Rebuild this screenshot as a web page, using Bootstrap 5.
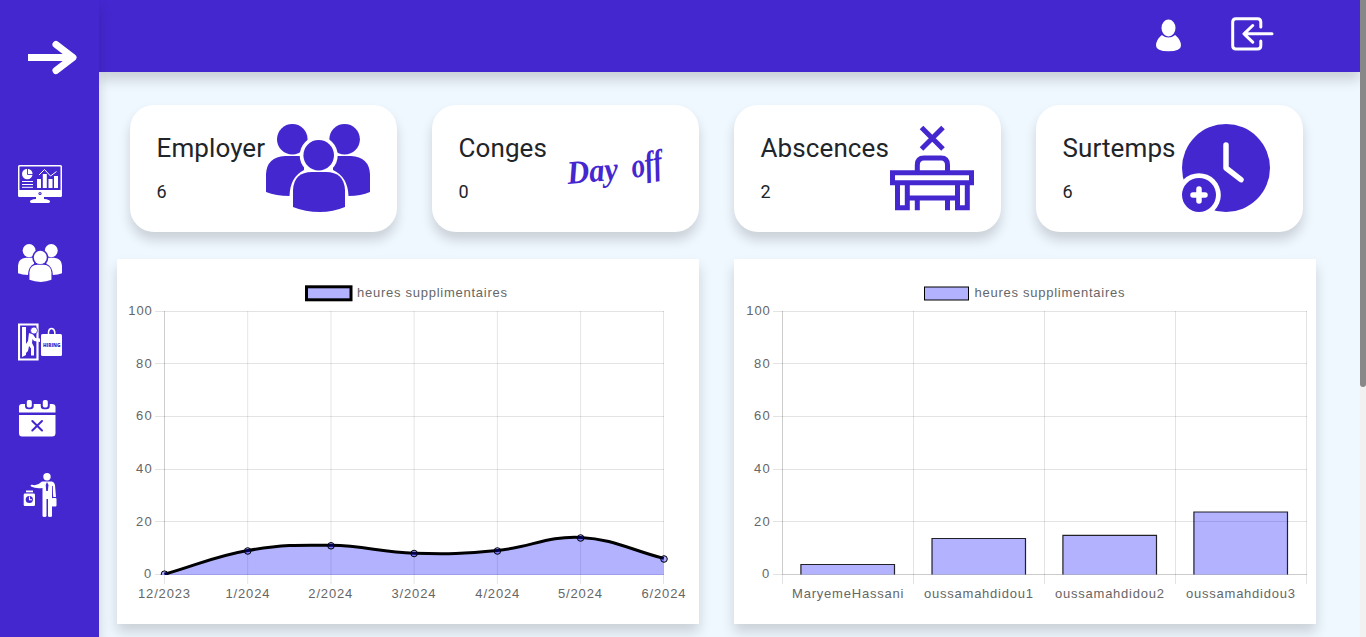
<!DOCTYPE html>
<html lang="fr">
<head>
<meta charset="utf-8">
<meta name="viewport" content="width=device-width, initial-scale=1">
<title>Dashboard</title>
<link rel="stylesheet" href="https://cdn.jsdelivr.net/npm/bootstrap@5.3.0/dist/css/bootstrap.min.css">
<style>
  :root { --brand: #4527cf; }
  body { font-family: Roboto, sans-serif; background: #f0f8ff; }
  svg { display: block; flex: none; }
  .soft-shadow { box-shadow: 0 8px 12px rgba(0, 0, 0, .16); }
  .side-menu { width: 99px; background: var(--brand); padding: 40px 0 0 18px; z-index: 3; color: #fff; }
  .side-menu .toggle-link { margin: 0 0 90px 9px; }
  .top-bar { height: 72px; background: var(--brand); color: #fff; padding-right: 86px; gap: 49px; z-index: 2; }
  .stat-row { padding: 33px 57px 0 31px; gap: 35px; }
  .stat-card { flex: 1 1 0; height: 127px; border: 0; border-radius: 24px; padding: 19px 27px 0 26.5px; color: var(--brand); }
  .stat-name { font-size: 26px; line-height: 32px; margin: 8px 0 17px; color: #212529; white-space: nowrap; letter-spacing: .1px; font-weight: 400; }
  .stat-value { font-size: 18px; line-height: 22px; color: #212529; margin: 0; }
  .chart-row { padding: 27px 44px 0 18px; gap: 35px; }
  .chart-box { width: 582px; height: 365px; }
  .chart-box text { font: 13px "Liberation Sans", Arial, sans-serif; fill: #666; }
  .scroll-track { width: 6px; background: #f1f1f1; }
  .scroll-thumb { height: 387px; background: #888; border-radius: 0 0 3px 3px; }
</style>
</head>
<body class="vh-100 overflow-hidden">
<div class="d-flex vh-100">

  <nav class="side-menu position-relative soft-shadow flex-shrink-0">
    <a href="#" class="toggle-link d-block text-reset" aria-label="Menu">
      <svg width="52" height="35" viewBox="27 40 52 35"><path d="M28 57.5H73" stroke="currentColor" stroke-width="7"/><path d="M56 44.500L73 57.500L56 70.500" fill="none" stroke="currentColor" stroke-width="7" stroke-linecap="round" stroke-linejoin="round"/></svg>
    </a>
    <a href="#" class="d-block text-reset" aria-label="Tableau de bord">
      <svg width="46" height="78" viewBox="18 165 46 78">
        <rect x="18" y="165" width="44" height="32" rx="1.500" fill="#fff"/>
        <path d="M19.500 166.500H60.500V190H19.500Z" fill="#4527cf"/>
        <path d="M36 197H44V199Q50 199.500 50 201.500Q50 203 48 203H32Q30 203 30 201.500Q30 199.500 36 199Z" fill="#fff"/>
        <circle cx="40" cy="193.500" r="1.600" fill="#4527cf"/><circle cx="40" cy="193.500" r=".5" fill="#fff"/>
        <circle cx="27.300" cy="174" r="5.300" fill="#fff"/><path d="M27.500 168V174.500H33" fill="none" stroke="#4527cf" stroke-width=".9"/>
        <path d="M22 181.500H33M22 184.500H33M22 187.300H33" stroke="#fff" stroke-width="1"/>
        <path d="M37 179H41V188H37ZM42.800 174H46.800V188H42.800ZM48.500 179H52.500V188H48.500ZM54 176H58V188H54Z" fill="#fff"/>
        <path d="M39 175L44.500 169.500L50.500 176L56.500 171.500" fill="none" stroke="#fff" stroke-width="1"/>
      </svg>
    </a>
    <a href="#" class="d-block text-reset" aria-label="Employés">
      <svg width="46" height="80" viewBox="18 243 46 80"><svg x="18" y="244" width="44" height="38" viewBox="266 124 104 88" preserveAspectRatio="none"><use href="#people"/></svg></svg>
    </a>
    <a href="#" class="d-block text-reset" aria-label="Recrutement">
      <svg width="46" height="77" viewBox="18 323 46 77">
        <path d="M19 324.500H37.500V359.500H19Z" fill="none" stroke="#fff" stroke-width="2.200"/>
        <path d="M22 327H26V355L22 357Z" fill="#fff"/>
        <circle cx="34" cy="330.500" r="3.500" fill="#fff" stroke="#4527cf" stroke-width=".8"/>
        <path d="M29 333L33 334.500L35.500 338L40 338.500V342L34 341L32.500 339L32 343L34 347V355.500H31V348.500L29 346L28 351L26 353V344L28 341Z" fill="#fff"/>
        <path d="M42.500 334H60.500Q62 334 62 335.500V354.500Q62 356 60.500 356H42.500Q41 356 41 354.500V335.500Q41 334 42.500 334Z" fill="#fff"/>
        <path d="M48.500 334V332Q49 328.500 51.500 328.500T54.800 332V334" fill="none" stroke="#fff" stroke-width="1.500"/>
        <text x="43" y="346.700" font-family="Open Sans, sans-serif" font-size="5" font-weight="800" textLength="17.500" lengthAdjust="spacingAndGlyphs" fill="#4527cf">HIRING</text>
      </svg>
    </a>
    <a href="#" class="d-block text-reset" aria-label="Absences">
      <svg width="46" height="73" viewBox="18 400 46 73">
        <path d="M19 412.500V407Q19 404 22 404H52Q55.500 404 55.500 407V412.500ZM19 415H55.500V433Q55.500 436.500 52 436.500H22Q19 436.500 19 433Z" fill="#fff"/>
        <path d="M25.800 403V406Q25.800 408.500 28.500 408.500H30Q33 408.500 33 406V403M41.500 403V406Q41.500 408.500 44 408.500H46.500Q49 408.500 49 406V403" fill="#4527cf" stroke="#4527cf" stroke-width="1.500"/>
        <rect x="26.800" y="400" width="5" height="7.500" rx="1.800" fill="#fff"/><rect x="42.800" y="400" width="5" height="7.500" rx="1.800" fill="#fff"/>
        <path d="M32.300 421L42 430.500M42 421L32.300 430.500" stroke="#4527cf" stroke-width="2" stroke-linecap="round"/>
      </svg>
    </a>
    <a href="#" class="d-block text-reset" aria-label="Surtemps">
      <svg width="46" height="46" viewBox="18 473 46 46" fill="#fff">
        <circle cx="47" cy="476.800" r="3.700"/>
        <path d="M42 481.500H52Q54.500 482 55 485L56 497H53.300L52 487V516Q52 517 50 517T48 516V499H46.500V516Q46.500 517 44.500 517T42.500 516V488Q36 489 31 486.500Q30 484.500 32 484.800Q37 486.500 42 481.500Z"/>
        <path d="M47 482L48.500 485L47.800 491H46.200L45.700 485Z" fill="#4527cf"/>
        <path d="M52.500 486V500" stroke="#4527cf" stroke-width=".8"/>
        <rect x="51.700" y="498" width="4.800" height="8.500" rx="1"/>
        <path d="M26 490.500H33V492.300H26Z"/><rect x="23.700" y="493.500" width="11.300" height="12.500" rx="1.200"/>
        <circle cx="29.300" cy="499.500" r="3.600" fill="#4527cf"/><path d="M29.500 496.500V499.700H32" fill="none" stroke="#fff" stroke-width="1.100"/>
      </svg>
    </a>
  </nav>

  <main class="flex-grow-1 overflow-hidden">
    <header class="top-bar position-relative d-flex justify-content-end soft-shadow">
      <a href="#" class="text-reset" aria-label="Profil">
        <svg width="27" height="72" viewBox="1155 0 27 72" fill="#fff"><ellipse cx="1168.500" cy="28" rx="7" ry="8.400"/><path d="M1161.800 35Q1168.500 40 1175.200 35Q1181 40 1181 45.500Q1181 51.300 1168.500 51.300T1156 45.500Q1156 40 1161.800 35Z"/></svg>
      </a>
      <a href="#" class="text-reset" aria-label="Déconnexion">
        <svg width="43" height="72" viewBox="1231 0 43 72" fill="none" stroke="#fff" stroke-width="3" stroke-linecap="round" stroke-linejoin="round"><path d="M1260.800 27V22Q1260.800 18.800 1257.500 18.800H1236Q1232.700 18.800 1232.700 22V45.800Q1232.700 49 1236 49H1257.500Q1260.800 49 1260.800 45.800V41"/><path d="M1272 33.800H1244M1252.700 25.500L1244 33.800L1252.700 42.200"/></svg>
      </a>
    </header>

    <section class="stat-row d-flex">
      <article class="card stat-card soft-shadow flex-row justify-content-between">
        <div><h2 class="stat-name">Employer</h2><p class="stat-value">6</p></div>
        <svg width="104" height="88" viewBox="266 124 104 88" fill="currentColor">
          <mask id="halo" maskUnits="userSpaceOnUse" x="260" y="120" width="116" height="96"><path d="M260 120H376V216H260Z" fill="#fff"/><circle cx="318.700" cy="155.400" r="19" fill="#000"/></mask>
          <g id="people" fill="currentColor">
            <g mask="url(#halo)">
              <circle cx="292.300" cy="139.300" r="15.300"/><circle cx="344.600" cy="139.300" r="15.300"/>
              <path d="M266 192V174Q267 157 285 156H304V170Q290 177 289.500 196Q276 196 266 192Z"/>
              <path d="M370 192V174Q369 157 351 156H333V170Q348 177 348.500 196Q361 196 370 192Z"/>
            </g>
            <circle cx="318.700" cy="155.200" r="15.300"/>
            <path d="M293 207V190Q294 172 312 172H326Q344 172 345 190V207Q333 212 320 212Q305 212 293 207Z"/>
          </g>
        </svg>
      </article>
      <article class="card stat-card soft-shadow flex-row justify-content-between">
        <div><h2 class="stat-name">Conges</h2><p class="stat-value">0</p></div>
        <svg class="overflow-visible" width="108" height="88" viewBox="564 124 108 88" fill="currentColor">
          <g font-family="Liberation Serif, serif" font-style="italic" font-weight="700">
            <text transform="translate(568 184) rotate(-5)" font-size="33" textLength="51" lengthAdjust="spacingAndGlyphs">Day</text>
            <text transform="translate(633 178) rotate(-9)" font-size="35" textLength="31" lengthAdjust="spacingAndGlyphs">off</text>
          </g>
        </svg>
      </article>
      <article class="card stat-card soft-shadow flex-row justify-content-between">
        <div><h2 class="stat-name">Abscences</h2><p class="stat-value">2</p></div>
        <svg width="84" height="88" viewBox="890 124 84 88" fill="none" stroke="currentColor" stroke-width="5">
          <path d="M921.500 127.500L943 149M943 127.500L921.500 149"/>
          <path d="M917.300 171V165Q917.300 158 924 158H941Q947.500 158 947.500 165V171"/>
          <path d="M892.500 172.700H971.500V182.700H892.500Z"/>
          <path d="M897.500 182V207.700H907.300V182M957.500 182V207.700H967.300V182M907 198H957.500M917.300 198V210.200M947.500 198V210.200"/>
        </svg>
      </article>
      <article class="card stat-card soft-shadow flex-row justify-content-between">
        <div><h2 class="stat-name">Surtemps</h2><p class="stat-value">6</p></div>
        <svg width="94" height="88" viewBox="1182 124 94 88">
          <circle cx="1226" cy="168" r="44" fill="currentColor"/>
          <path d="M1226 145V168L1241 179.700" fill="none" stroke="#fff" stroke-width="5.500" stroke-linecap="round" stroke-linejoin="round"/>
          <circle cx="1199" cy="195" r="21.800" fill="#fff"/><circle cx="1199" cy="195" r="17" fill="currentColor"/>
          <path d="M1199 189V201M1193 195H1205" stroke="#fff" stroke-width="5.500" stroke-linecap="round"/>
        </svg>
      </article>
    </section>

    <section class="chart-row d-flex">
      <div class="chart-box bg-white soft-shadow flex-shrink-0">
        <svg width="582" height="365" viewBox="117 259 582 365">
          <path d="M155 311.500H664M155 363.500H664M155 416.500H664M155 469.500H664M155 521.500H664M155 574.500H664" stroke="#000" stroke-opacity=".11"/>
          <path d="M247.700 311V584M331 311V584M414.100 311V584M497.400 311V584M580.600 311V584M663.500 311V584M164.500 574V584" stroke="#000" stroke-opacity=".1"/>
          <path d="M164.500 311V574" stroke="#000" stroke-opacity=".2"/>
          <path d="M164.500 574.200C197.800 564.700 214.400 556.300 247.700 550.500C281 544.700 297.700 544.800 331 545.300C364.300 545.800 380.800 552.200 414.100 553.200C447.400 554.200 464.100 553.700 497.400 550.500C530.700 547.300 547.300 535.800 580.600 537.400C613.900 539 630.500 550 663.800 558.400V575H164.500Z" fill="#00f" fill-opacity=".3"/>
          <clipPath id="plot"><path d="M160 300H670V575H160Z"/></clipPath>
          <g clip-path="url(#plot)">
            <path d="M164.500 574.200C197.800 564.700 214.400 556.300 247.700 550.500C281 544.700 297.700 544.800 331 545.300C364.300 545.800 380.800 552.200 414.100 553.200C447.400 554.200 464.100 553.700 497.400 550.500C530.700 547.300 547.300 535.800 580.600 537.400C613.900 539 630.500 550 663.800 558.400" fill="none" stroke="#000" stroke-width="3"/>
            <g fill="#00f" fill-opacity=".3" stroke="#000"><circle cx="164.500" cy="574.200" r="3.300"/><circle cx="247.700" cy="551" r="3.300"/><circle cx="331" cy="545.800" r="3.300"/><circle cx="414.100" cy="553.500" r="3.300"/><circle cx="497.400" cy="551" r="3.300"/><circle cx="580.600" cy="538" r="3.300"/><circle cx="664" cy="559" r="3.300"/></g>
          </g>
          <rect x="306.500" y="286.800" width="44.500" height="13" fill="#b2b2ff" stroke="#000" stroke-width="3"/>
          <text x="357" y="297" textLength="150">heures supplimentaires</text>
          <g>
            <text x="128.300" y="315" textLength="23.500">100</text><text x="136" y="368" textLength="15.700">80</text><text x="136" y="420" textLength="15.700">60</text><text x="136" y="473" textLength="15.700">40</text><text x="136" y="526" textLength="15.700">20</text><text x="144" y="578">0</text>
          </g>
          <g>
            <text x="138" y="598" textLength="52">12/2023</text><text x="225.500" y="598" textLength="44">1/2024</text><text x="308.300" y="598" textLength="44">2/2024</text><text x="391.500" y="598" textLength="44">3/2024</text><text x="475.300" y="598" textLength="44">4/2024</text><text x="558" y="598" textLength="44">5/2024</text><text x="641.500" y="598" textLength="44">6/2024</text>
          </g>
        </svg>
      </div>
      <div class="chart-box bg-white soft-shadow flex-shrink-0">
        <svg width="582" height="365" viewBox="734 259 582 365">
          <path d="M773 311.500H1307M773 363.500H1307M773 416.500H1307M773 469.500H1307M773 521.500H1307" stroke="#000" stroke-opacity=".11"/>
          <path d="M913.500 311V584M1044.500 311V584M1175.500 311V584M1306.500 311V584M782.500 574V584M773 574.500H782" stroke="#000" stroke-opacity=".11"/>
          <path d="M782.500 311V574.500H1307" fill="none" stroke="#000" stroke-opacity=".2"/>
          <g fill="#00f" fill-opacity=".3" stroke="#000" stroke-opacity=".85" stroke-width="1.200">
            <path d="M800.900 574.500V564.500H894.500V574.500"/><path d="M932 574.500V538.500H1025.500V574.500"/><path d="M1062.900 574.500V535.400H1156.500V574.500"/><path d="M1193.900 574.500V512H1287.500V574.500"/>
          </g>
          <rect x="924.500" y="287" width="44" height="13" fill="#b2b2ff" stroke="#000"/>
          <text x="974.500" y="297" textLength="150">heures supplimentaires</text>
          <g>
            <text x="746.300" y="315" textLength="23.500">100</text><text x="754" y="368" textLength="15.700">80</text><text x="754" y="420" textLength="15.700">60</text><text x="754" y="473" textLength="15.700">40</text><text x="754" y="526" textLength="15.700">20</text><text x="762" y="578">0</text>
          </g>
          <g>
            <text x="792" y="598" textLength="111.500">MaryemeHassani</text><text x="924" y="598" textLength="109">oussamahdidou1</text><text x="1055" y="598" textLength="109">oussamahdidou2</text><text x="1186" y="598" textLength="109">oussamahdidou3</text>
          </g>
        </svg>
      </div>
    </section>
  </main>

  <div class="scroll-track flex-shrink-0"><div class="scroll-thumb"></div></div>
</div>
<script src="https://cdn.jsdelivr.net/npm/bootstrap@5.3.0/dist/js/bootstrap.bundle.min.js"></script>
</body>
</html>
